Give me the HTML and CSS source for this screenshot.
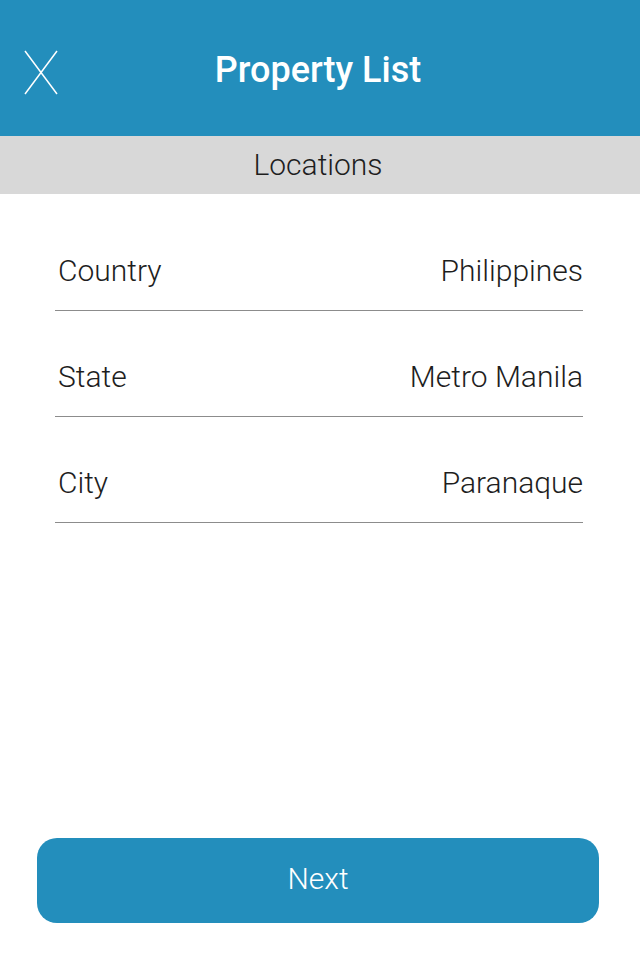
FILE: index.html
```html
<!DOCTYPE html>
<html>
<head>
<meta charset="utf-8">
<link rel="stylesheet" href="styles.css">
</head>
<body>
<div class="screen">
  <header class="topbar">
    <span class="close" aria-label="Close">
      <svg width="34" height="45" viewBox="0 0 34 45"><path d="M1 1 L33 44 M33 1 L1 44" stroke="#fff" stroke-width="1.5" fill="none"/></svg>
    </span>
    <h1 class="title">Property List</h1>
  </header>
  <div class="section">Locations</div>
  <div class="list">
    <div class="row"><span class="label">Country</span><span class="value">Philippines</span></div>
    <div class="row"><span class="label">State</span><span class="value">Metro Manila</span></div>
    <div class="row"><span class="label">City</span><span class="value">Paranaque</span></div>
  </div>
  <div class="footer">
    <button class="next">Next</button>
  </div>
</div>
</body>
</html>
```
FILE: styles.css
```css
* { box-sizing: border-box; }
html, body { margin: 0; padding: 0; background: #fff; }
body { font-family: Roboto, "Noto Sans", sans-serif; }
.screen { width: 640px; height: 960px; display: flex; flex-direction: column; }
.topbar {
  height: 136px;
  background: #238ebc;
  display: flex;
  align-items: center;
  justify-content: center;
  position: relative;
}
.close { position: absolute; left: 24px; top: 50px; display: block; line-height: 0; }
.title {
  margin: 0;
  color: #fff;
  font-weight: 500;
  font-size: 36px;
  margin-top: 4px;
  margin-left: -4px;
}
.section {
  height: 58px;
  background: #d8d8d8;
  color: #1e1e1e;
  font-weight: 280;
  font-size: 30px;
  display: flex;
  align-items: center;
  justify-content: center;
  margin-left: -4px;
  padding-bottom: 2px;
}
.list { margin: 11px 57px 0 55px; }
.row {
  height: 106px;
  border-bottom: 1px solid #8c8c8c;
  display: flex;
  justify-content: space-between;
  align-items: flex-end;
  padding: 0 0 22px 3px;
  font-weight: 280;
  font-size: 30px;
  color: #1e1e1e;
  line-height: 34px;
}
.footer { margin-top: auto; padding: 0 41px 37px 37px; }
.next {
  width: 100%;
  height: 85px;
  border: none;
  border-radius: 20px;
  background: #238ebc;
  color: #fff;
  font-family: Roboto, sans-serif;
  font-weight: 280;
  font-size: 30px;
  padding: 0 0 4px;
}
```
